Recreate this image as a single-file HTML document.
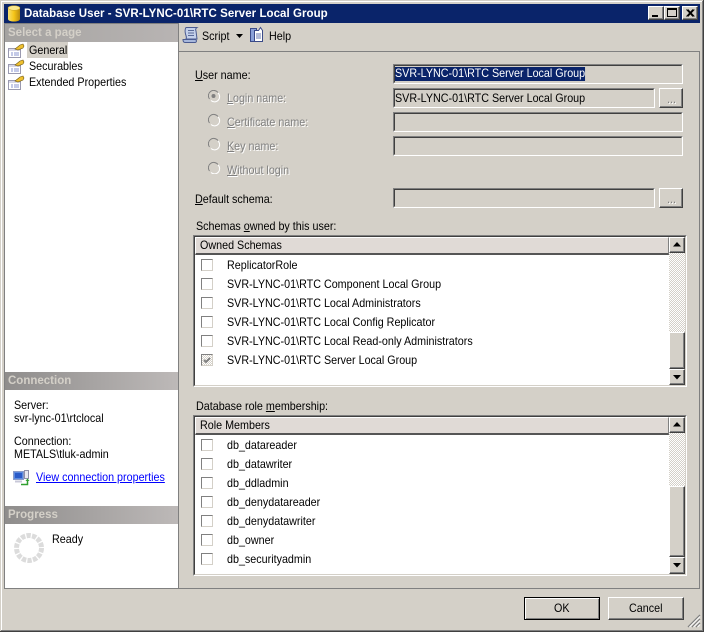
<!DOCTYPE html>
<html><head><meta charset="utf-8"><style>
html,body{margin:0;padding:0;background:#d4d0c8}
#w{position:relative;width:704px;height:632px;overflow:hidden;background:#d4d0c8;font:11.6px "Liberation Sans",sans-serif;color:#000}
#w div,#w svg,#w span.t{position:absolute}
.t{white-space:nowrap;line-height:14px;transform:translateY(1px) scaleX(.927);transform-origin:0 0}
.d{color:#808080;text-shadow:1px 1px 0 #fff}
.f{box-sizing:border-box;border:1px solid;border-color:#808080 #fff #fff #808080}
.f:before{content:"";position:absolute;left:0;top:0;right:0;bottom:0;border:1px solid;border-color:#404040 #d4d0c8 #d4d0c8 #404040}
.b{box-sizing:border-box;background:#d4d0c8;border:1px solid;border-color:#fff #404040 #404040 #fff;box-shadow:inset -1px -1px 0 #808080}
.h{background:linear-gradient(90deg,#8f8d8c,#bdb9b8);color:#d4d0c8;font-weight:bold;box-sizing:border-box;padding-left:3px;line-height:19px;font-size:11.5px}
.c{box-sizing:border-box;width:12px;height:12px;background:#fff;border:1px solid;border-color:#808080 #d4d0c8 #d4d0c8 #808080}
.tk{background-image:repeating-conic-gradient(#d4d0c8 0 25%,#fff 0 50%);background-size:2px 2px}
.hd{background:#e0dad6;box-sizing:border-box;border-bottom:2px solid #555;border-right:1px solid #808080;border-top:1px solid #fff;border-left:1px solid #fff;padding-left:4px;line-height:15px}
.hd span{display:inline-block;transform:scaleX(.927);transform-origin:0 0}
u{text-decoration:underline}
</style></head><body><div id="w">
<!-- window frame -->
<div style="left:0;top:0;width:704px;height:1px;background:#d4d0c8"></div>
<div style="left:1px;top:1px;width:702px;height:1px;background:#fff"></div>
<div style="left:1px;top:1px;width:1px;height:630px;background:#fff"></div>
<div style="left:702px;top:1px;width:1px;height:630px;background:#808080"></div>
<div style="left:703px;top:0;width:1px;height:632px;background:#404040"></div>
<div style="left:0;top:631px;width:704px;height:1px;background:#404040"></div>
<div style="left:1px;top:630px;width:702px;height:1px;background:#808080"></div>
<!-- title bar -->
<div style="left:4px;top:4px;width:696px;height:19px;background:#0a246a"></div>
<svg style="left:7px;top:5px" width="14" height="17" viewBox="0 0 14 17"><defs><linearGradient id="y" x1="0" x2="1" y1="0" y2="0"><stop offset="0" stop-color="#f8e070"/><stop offset=".5" stop-color="#f5c518"/><stop offset="1" stop-color="#b88a10"/></linearGradient></defs><path d="M1 3v11c0 1.500 2.500 2.500 6 2.500s6-1 6-2.500V3z" fill="url(#y)"/><ellipse cx="7" cy="3" rx="6" ry="2.300" fill="#fbe88c" stroke="#c9a020" stroke-width=".5"/></svg>
<span class="t" style="left:24px;top:6px;color:#fff;font-weight:bold;font-size:11.500px;letter-spacing:.05px;transform:translateY(1px)">Database User - SVR-LYNC-01\RTC Server Local Group</span>
<div class="b" style="left:648px;top:6px;width:16px;height:14px"></div>
<div style="left:652px;top:15px;width:6px;height:2px;background:#000"></div>
<div class="b" style="left:664px;top:6px;width:16px;height:14px"></div>
<div style="left:667px;top:8px;width:10px;height:9px;box-sizing:border-box;border:1px solid #000;border-top-width:2px"></div>
<div class="b" style="left:682px;top:6px;width:16px;height:14px"></div>
<svg style="left:686px;top:9px" width="9" height="8" viewBox="0 0 9 8"><path d="M.5 .5l6.500 7M1.800 .5l6.500 7M7 .5l-6.500 7M8.300 .5l-6.500 7" stroke="#000" stroke-width="1" fill="none"/></svg>
<!-- left pane -->
<div style="left:4px;top:23px;width:175px;height:566px;background:#808080"></div>
<div style="left:5px;top:24px;width:173px;height:564px;background:#fff"></div>
<div class="h" style="left:5px;top:24px;width:173px;height:18px;background:linear-gradient(90deg,#a5a3a1,#b8b4b3)">Select a page</div>
<div style="left:27px;top:42px;width:41px;height:16px;background:#d4d0c8"></div>
<span class="t" style="left:29px;top:43px">General</span>
<span class="t" style="left:29px;top:59px">Securables</span>
<span class="t" style="left:29px;top:75px">Extended Properties</span>
<svg style="left:8px;top:43px" width="17" height="48" viewBox="0 0 17 48"><g id="p"><path d="M.5 5.500h12v9H.5z" fill="#fff" stroke="#9a9ab0"/><path d="M1 6h11v2H1z" fill="#d8d8e8"/><path d="M3 10h2M6 10h5M3 12h2M6 12h5" stroke="#8a94d0"/><path d="M7 6l5-4 3-1 1 2-1 2-5 2z" fill="#eec030" stroke="#705810" stroke-width=".6"/></g><use href="#p" y="16"/><use href="#p" y="32"/></svg>
<div class="h" style="left:5px;top:372px;width:173px;height:18px">Connection</div>
<span class="t" style="left:14px;top:398px">Server:</span>
<span class="t" style="left:14px;top:411px">svr-lync-01\rtclocal</span>
<span class="t" style="left:14px;top:434px">Connection:</span>
<span class="t" style="left:14px;top:447px">METALS\tluk-admin</span>
<svg style="left:13px;top:469px" width="17" height="17" viewBox="0 0 17 17"><path d="M.5 2.500h10v8H.5z" fill="#5a8ae0" stroke="#8a9ac8"/><path d="M2 4h7v5H2z" fill="#2a5ac8"/><path d="M11.500 1.500h4v8h-4z" fill="#e8e8f0" stroke="#9090a8"/><path d="M2 11.500h7v2H2z" fill="#c8c8d8"/><path d="M8 15.500h6.500V11" fill="none" stroke="#30a030" stroke-width="1.500"/><path d="M12.500 12l2-2.500 2 2.500z" fill="#30a030"/></svg>
<span class="t" style="left:36px;top:470px;color:#0000ff;text-decoration:underline">View connection properties</span>
<div class="h" style="left:5px;top:506px;width:173px;height:18px">Progress</div>
<svg style="left:14px;top:532px" width="30" height="32" viewBox="-15 -16 30 32"><circle r="12.500" fill="none" stroke="#dcdcdc" stroke-width="5" stroke-dasharray="4.300 1.300"/></svg>
<span class="t" style="left:52px;top:532px">Ready</span>
<!-- toolbar -->
<div style="left:179px;top:51px;width:521px;height:1px;background:#808080"></div>
<div style="left:699px;top:51px;width:1px;height:538px;background:#808080"></div>
<div style="left:179px;top:588px;width:521px;height:1px;background:#808080"></div>
<svg style="left:182px;top:26px" width="18" height="18" viewBox="0 0 18 18"><path d="M4 1.500h11c-1.500 1-1.500 2.500-1 3.500l1 8H4c1-2 0-3-.5-5S3 3 4 1.500z" fill="#c4d0ea" stroke="#4a5a90"/><path d="M1 13.500h12c1 0 1.500 1 1.500 1.500s-.5 1.500-1.500 1.500H3c-1.500 0-2-1.500-2-3z" fill="#a8b8dc" stroke="#4a5a90"/><path d="M6 4.500h6M6 7h6M6 9.500h6" stroke="#5a6a98"/></svg>
<span class="t" style="left:202px;top:29px">Script</span>
<svg style="left:236px;top:34px" width="7" height="4"><path d="M0 0h7L3.500 4z" fill="#000"/></svg>
<svg style="left:249px;top:26px" width="17" height="18" viewBox="0 0 17 18"><path d="M1.500 2.500h6v13h-6z" fill="#8aa0d8" stroke="#3a4a88"/><path d="M5.500 4.500h4l2-3 2 3v11h-8z" fill="#fff" stroke="#3a4a88"/><path d="M7 8h5M7 10h5M7 12h5" stroke="#6a7ab0"/></svg>
<span class="t" style="left:269px;top:29px">Help</span>
<!-- form -->
<span class="t" style="left:195px;top:68px"><u>U</u>ser name:</span>
<div class="f" style="left:393px;top:64px;width:290px;height:20px"></div>
<span class="t" style="left:395px;top:66px;background:#0a246a;color:#fff;height:14px">SVR-LYNC-01\RTC Server Local Group</span>
<div class="f" style="left:393px;top:88px;width:262px;height:20px"></div>
<span class="t" style="left:395px;top:91px">SVR-LYNC-01\RTC Server Local Group</span>
<div class="b" style="left:659px;top:88px;width:24px;height:20px"></div>
<span class="t d" style="left:667px;top:92px">...</span>
<div class="f" style="left:393px;top:112px;width:290px;height:20px"></div>
<div class="f" style="left:393px;top:136px;width:290px;height:20px"></div>
<div class="f" style="left:393px;top:188px;width:262px;height:20px"></div>
<div class="b" style="left:659px;top:188px;width:24px;height:20px"></div>
<span class="t d" style="left:667px;top:192px">...</span>
<svg style="left:208px;top:90px" width="14" height="84" viewBox="0 0 14 84"><g id="r" fill="none"><path d="M1.500 9A5 5 0 0 1 10 2.500" stroke="#808080"/><path d="M10 3A4.800 4.800 0 0 1 3 10.500" stroke="#fff"/></g><use href="#r" y="24"/><use href="#r" y="48"/><use href="#r" y="72"/><circle cx="5.500" cy="6" r="2" fill="#808080"/></svg>
<span class="t d" style="left:227px;top:91px"><u>L</u>ogin name:</span>
<span class="t d" style="left:227px;top:115px"><u>C</u>ertificate name:</span>
<span class="t d" style="left:227px;top:139px"><u>K</u>ey name:</span>
<span class="t d" style="left:227px;top:163px"><u>W</u>ithout login</span>
<span class="t" style="left:195px;top:192px"><u>D</u>efault schema:</span>
<!-- list 1 -->
<span class="t" style="left:196px;top:219px">Schemas <u>o</u>wned by this user:</span>
<div class="f" style="left:193px;top:235px;width:494px;height:152px;background:#fff"></div>
<div class="hd" style="left:195px;top:237px;width:474px;height:18px"><span>Owned Schemas</span></div>
<div class="tk" style="left:669px;top:253px;width:16px;height:80px"></div>
<div class="b" style="left:669px;top:237px;width:16px;height:16px"></div>
<svg style="left:673px;top:242px" width="8" height="5"><path d="M4 0l4 4.500H0z"/></svg>
<div class="b" style="left:669px;top:332px;width:16px;height:37px"></div>
<div class="b" style="left:669px;top:369px;width:16px;height:16px"></div>
<svg style="left:673px;top:375px" width="8" height="5"><path d="M0 0h8L4 4.500z"/></svg>
<div class="c" style="left:201px;top:259px"></div><span class="t" style="left:227px;top:258px">ReplicatorRole</span>
<div class="c" style="left:201px;top:278px"></div><span class="t" style="left:227px;top:277px">SVR-LYNC-01\RTC Component Local Group</span>
<div class="c" style="left:201px;top:297px"></div><span class="t" style="left:227px;top:296px">SVR-LYNC-01\RTC Local Administrators</span>
<div class="c" style="left:201px;top:316px"></div><span class="t" style="left:227px;top:315px">SVR-LYNC-01\RTC Local Config Replicator</span>
<div class="c" style="left:201px;top:335px"></div><span class="t" style="left:227px;top:334px">SVR-LYNC-01\RTC Local Read-only Administrators</span>
<div class="c tk" style="left:201px;top:354px"></div><svg style="left:203px;top:356px" width="9" height="9"><path d="M1 4l2 2 4-4" fill="none" stroke="#808080" stroke-width="2"/></svg><span class="t" style="left:227px;top:353px">SVR-LYNC-01\RTC Server Local Group</span>
<!-- list 2 -->
<span class="t" style="left:196px;top:399px">Database role <u>m</u>embership:</span>
<div class="f" style="left:193px;top:415px;width:494px;height:161px;background:#fff"></div>
<div class="hd" style="left:195px;top:417px;width:474px;height:18px"><span>Role Members</span></div>
<div class="tk" style="left:669px;top:433px;width:16px;height:54px"></div>
<div class="b" style="left:669px;top:417px;width:16px;height:16px"></div>
<svg style="left:673px;top:422px" width="8" height="5"><path d="M4 0l4 4.500H0z"/></svg>
<div class="b" style="left:669px;top:486px;width:16px;height:71px"></div>
<div class="b" style="left:669px;top:557px;width:16px;height:17px"></div>
<svg style="left:673px;top:563px" width="8" height="5"><path d="M0 0h8L4 4.500z"/></svg>
<div class="c" style="left:201px;top:439px"></div><span class="t" style="left:227px;top:438px">db_datareader</span>
<div class="c" style="left:201px;top:458px"></div><span class="t" style="left:227px;top:457px">db_datawriter</span>
<div class="c" style="left:201px;top:477px"></div><span class="t" style="left:227px;top:476px">db_ddladmin</span>
<div class="c" style="left:201px;top:496px"></div><span class="t" style="left:227px;top:495px">db_denydatareader</span>
<div class="c" style="left:201px;top:515px"></div><span class="t" style="left:227px;top:514px">db_denydatawriter</span>
<div class="c" style="left:201px;top:534px"></div><span class="t" style="left:227px;top:533px">db_owner</span>
<div class="c" style="left:201px;top:553px"></div><span class="t" style="left:227px;top:552px">db_securityadmin</span>
<!-- buttons -->
<div class="b" style="left:524px;top:597px;width:76px;height:23px;border:1px solid #000;box-shadow:inset 1px 1px 0 #fff,inset -1px -1px 0 #808080"></div>
<span class="t" style="left:554px;top:601px">OK</span>
<div class="b" style="left:608px;top:597px;width:76px;height:23px"></div>
<span class="t" style="left:629px;top:601px">Cancel</span>
<svg style="left:687px;top:614px" width="14" height="14"><path d="M13 1L1 13M13 5L5 13M13 9L9 13" stroke="#808080" fill="none" stroke-width="1.300"/><path d="M13 2.500L2.500 13M13 6.500L6.500 13M13 10.500L10.500 13" stroke="#fff" fill="none"/></svg>
</div></body></html>
